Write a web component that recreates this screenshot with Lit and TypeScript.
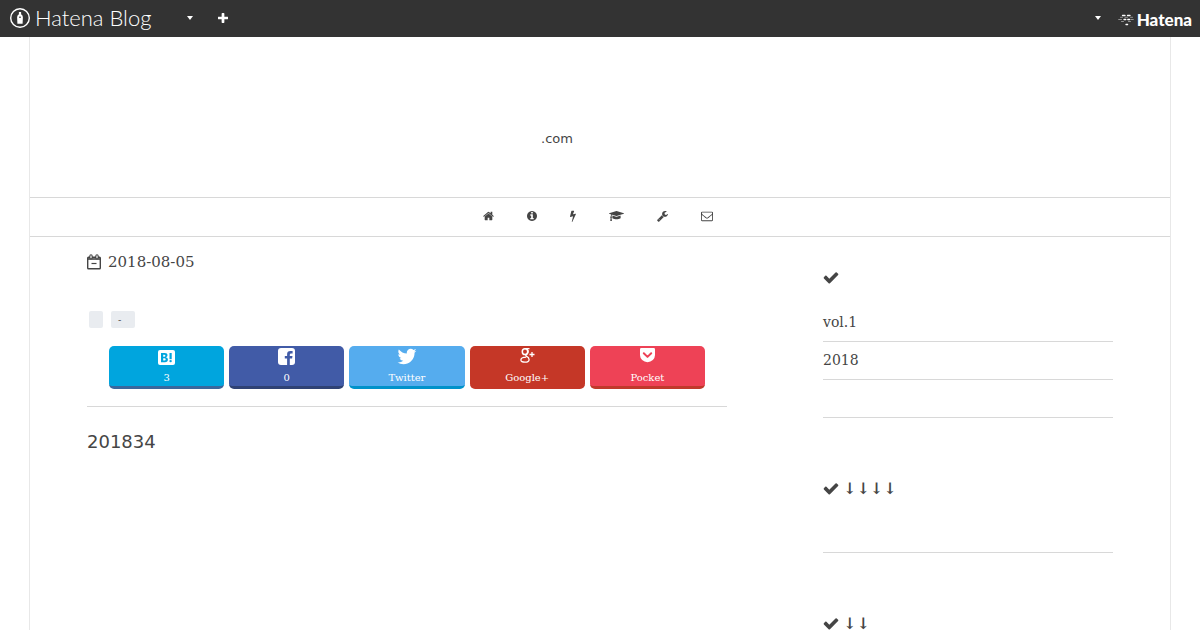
import { LitElement, html, css, nothing } from "lit";
import { customElement, property } from "lit/decorators.js";

type Glyph = { box: string; d: string };

const GLYPHS: Record<string, Glyph> = {
  home: { box: "64 0 1664 1792", d: "M1472 992v480q0 26-19 45t-45 19h-384v-384h-256v384h-384q-26 0-45-19t-19-45v-480q0-1 .5-3t.5-3l575-474 575 474q1 2 1 6zm223-69l-62 74q-8 9-21 11h-3q-13 0-21-7l-692-577-692 577q-12 8-24 7-13-2-21-11l-62-74q-8-10-7-23.5t11-21.5l719-599q32-26 76-26t76 26l244 204v-195q0-14 9-23t23-9h192q14 0 23 9t9 23v408l219 182q10 8 11 21.5t-7 23.5z" },
  info: { box: "128 0 1536 1792", d: "M1152 1376v-160q0-14-9-23t-23-9h-96v-512q0-14-9-23t-23-9h-320q-14 0-23 9t-9 23v160q0 14 9 23t23 9h96v320h-96q-14 0-23 9t-9 23v160q0 14 9 23t23 9h448q14 0 23-9t9-23zm-128-896v-160q0-14-9-23t-23-9h-192q-14 0-23 9t-9 23v160q0 14 9 23t23 9h192q14 0 23-9t9-23zm640 416q0 209-103 385.5t-279.5 279.5-385.5 103-385.5-103-279.5-279.5-103-385.5 103-385.5 279.5-279.5 385.5-103 385.5 103 279.5 279.5 103 385.5z" },
  bolt: { box: "448 0 896 1792", d: "M1333 566q18 20 7 44l-540 1157q-13 25-42 25-4 0-14-2-17-5-25.5-19t-4.5-30l197-808-406 101q-4 1-12 1-18 0-31-11-18-15-13-39l201-825q4-14 16-23t28-9h328q19 0 32 12.5t13 29.5q0 8-5 18l-171 463 396-98q8-2 12-2 19 0 34 15z" },
  cap: { box: "0 0 2304 1792", d: "M1774 836l18 316q4 69-82 128t-235 93.5-323 34.5-323-34.5-235-93.5-82-128l18-316 574 181q22 7 48 7t48-7zm530-324q0 23-22 31l-1120 352q-4 1-10 1t-10-1l-652-206q-43 34-71 111.5t-34 178.5q63 36 63 109 0 69-58 107l58 433q2 14-8 25-9 11-24 11h-192q-15 0-24-11-10-11-8-25l58-433q-58-38-58-107 0-73 65-111 11-207 98-330l-333-104q-22-8-22-31t22-31l1120-352q4-1 10-1t10 1l1120 352q22 8 22 31z" },
  wrench: { box: "64 0 1664 1792", d: "M448 1472q0-26-19-45t-45-19-45 19-19 45 19 45 45 19 45-19 19-45zm644-420l-682 682q-37 37-90 37-52 0-91-37l-106-108q-38-36-38-90 0-53 38-91l681-681q39 98 114.5 173.5t173.5 114.5zm634-435q0 39-23 106-47 134-164.5 217.5t-258.5 83.5q-185 0-316.5-131.5t-131.5-316.5 131.5-316.5 316.5-131.5q58 0 121.5 16.5t107.5 46.5q16 11 16 28t-16 28l-293 169v224l193 107q5-3 79-48.5t135.5-81 70.5-35.5q15 0 23.5 10t8.5 25z" },
  mail: { box: "0 0 1792 1792", d: "M1664 1504v-768q-32 36-69 66-268 206-426 338-51 43-83 67t-86.5 48.5-102.5 24.5h-2q-48 0-102.5-24.5t-86.5-48.5-83-67q-158-132-426-338-37-30-69-66v768q0 13 9.5 22.5t22.5 9.5h1472q13 0 22.5-9.5t9.5-22.5zm0-1051v-24.5l-.5-13-3-12.5-5.5-9-9-7.5-14-2.5h-1472q-13 0-22.5 9.5t-9.5 22.5q0 168 147 284 193 152 401 317 6 5 35 29.5t46 37.5 44.5 31.5 50.5 27.5 43 9h2q20 0 43-9t50.5-27.5 44.5-31.5 46-37.5 35-29.5q208-165 401-317 54-43 100.5-115.5t46.5-131.5zm128-37v1088q0 66-47 113t-113 47h-1472q-66 0-113-47t-47-113v-1088q0-66 47-113t113-47h1472q66 0 113 47t47 113z" },
  check: { box: "64 0 1664 1792", d: "M1671 566q0 40-28 68l-724 724-136 136q-28 28-68 28t-68-28l-136-136-362-362q-28-28-28-68t28-68l136-136q28-28 68-28t68 28l294 295 656-657q28-28 68-28t68 28l136 136q28 28 28 68z" },
  plus: { box: "192 128 1408 1408", d: "M1600 736v192q0 40-28 68t-68 28h-416v416q0 40-28 68t-68 28h-192q-40 0-68-28t-28-68v-416h-416q-40 0-68-28t-28-68v-192q0-40 28-68t68-28h416v-416q0-40 28-68t68-28h192q40 0 68 28t28 68v416h416q40 0 68 28t28 68z" },
  caret: { box: "0 0 6 4", d: "M0 0h6L3 4z" },
  twitter: { box: "64 192 1664 1408", d: "M1684 408q-67 98-162 167 1 14 1 42 0 130-38 259.5t-115.5 248.5-184.5 210.5-258 146-323 54.5q-271 0-496-145 35 4 78 4 225 0 401-138-105-2-188-64.5t-114-159.5q33 5 61 5 43 0 85-11-112-23-185.5-111.5t-73.5-205.5v-4q68 38 146 41-66-44-105-115t-39-154q0-88 44-163 121 149 294.5 238.5t371.5 99.5q-8-38-8-74 0-134 94.5-228.5t228.5-94.5q140 0 236 102 109-21 205-78-37 115-142 178 93-10 186-50z" },
};

const glyph = (name: string, cls: string) => html`<svg class=${cls} viewBox=${GLYPHS[name].box} fill="currentColor" aria-hidden="true"><path d=${GLYPHS[name].d}></path></svg>`;

const SHARE_ICONS: Record<string, unknown> = {
  hatena: html`<svg class="mark" viewBox="0 0 17 17" aria-hidden="true">
    <rect x="0" y="2" width="17" height="15" rx="2" fill="#fff"></rect>
    <path fill="#00a5de" fill-rule="evenodd" d="M3 5h3.700q2.800 0 2.800 2.300 0 1.600-1.600 2 2 .3 2 2.300 0 2.600-3 2.600H3zM5.200 6.800v2h1q1.200 0 1.200-1t-1.200-1zM5.200 10.300v2.200h1.200q1.300 0 1.300-1.100t-1.300-1.100z"></path>
    <path fill="#00a5de" d="M11.500 5h2.200v6.200h-2.200z"></path><circle cx="12.600" cy="13.100" r="1.200" fill="#00a5de"></circle>
  </svg>`,
  facebook: html`<svg class="mark" viewBox="0 0 17 17" aria-hidden="true">
    <rect width="17" height="17" rx="3" fill="#fff"></rect>
    <path fill="#415ba7" d="M9.100 17v-6.400H6.800V8h2.300V6.300Q9.100 3 12.400 3h2.200v2.600h-1.500q-1.300 0-1.300 1.100V8h2.700l-.4 2.600h-2.300V17z"></path>
  </svg>`,
  twitter: glyph("twitter", "mark bird"),
  google: html`<svg class="mark" viewBox="0 1 17 17" fill="none" stroke="#fff" aria-hidden="true">
    <ellipse cx="6" cy="4.700" rx="2.700" ry="2.900" stroke-width="1.500"></ellipse>
    <path d="M5.500 1.600h5M8 2.200q1.500 1 1.200 2.800-.2 1.200-1.200 2Q6 8.300 7.300 9.200q2.800 1.400 2.800 3.300 0 2.700-4.100 2.700-4.100 0-4.100-2.300 0-2.500 5.300-2.700" stroke-width="1.300"></path>
    <path d="M13 5v5M10.500 7.500h5" stroke-width="1.300"></path>
  </svg>`,
  pocket: html`<svg class="mark" viewBox="0 0 17 17" aria-hidden="true">
    <path fill="#fff" d="M2.200 0h12.600Q16 0 16 1.300V7a7.500 7.200 0 0 1-15 0V1.300Q1 0 2.200 0z"></path>
    <path d="M4.800 5.300L8.500 8.900l3.700-3.600" fill="none" stroke="#ee4256" stroke-width="2" stroke-linecap="round" stroke-linejoin="round"></path>
  </svg>`,
};

@customElement("share-button")
class ShareButton extends LitElement {
  @property() kind = "";
  @property() label = "";

  static styles = css`
    :host { display: block; }
    .link {
      display: flex; flex-direction: column; align-items: center; gap: 6px;
      box-sizing: border-box; height: 43px; padding-top: 2px;
      border-radius: 5px; border-bottom: 3px solid;
      color: #fff; text-decoration: none;
      font: 10px/14px "DejaVu Serif", serif;
    }
    .mark { display: block; width: 17px; height: 17px; overflow: visible; }
    .bird { width: 20px; }
    .hatena { background: #00a5de; border-color: #39679d; }
    .facebook { background: #415ba7; border-color: #2f4274; }
    .twitter { background: #55acee; border-color: #0092ca; }
    .google { background: #c53727; border-color: #c53727; }
    .pocket { background: #ee4256; border-color: #c0392b; }
  `;

  render() {
    return html`<a class="link ${this.kind}" href="#">${SHARE_ICONS[this.kind]}<span>${this.label}</span></a>`;
  }
}

@customElement("side-module")
class SideModule extends LitElement {
  @property() heading = "";
  @property({ attribute: false }) items: string[] = [];

  static styles = css`
    :host { display: block; margin-bottom: 59px; }
    .title {
      display: flex; align-items: flex-start; gap: 4px; height: 24px; margin: 0 0 14px;
      font: bold 16px/24px "DejaVu Serif", serif;
    }
    .tick { width: 16px; height: 17px; padding-top: 3px; }
    .list { margin: 0; padding: 0; list-style: none; }
    .row {
      box-sizing: border-box; height: 38px; border-bottom: 1px solid #d8d8d8;
      font: 14px/37px "DejaVu Serif", serif;
    }
    .entry { color: inherit; text-decoration: none; }
  `;

  render() {
    return html`
      <h2 class="title">${glyph("check", "tick")}<span>${this.heading}</span></h2>
      <ul class="list">
        ${this.items.map((t) => html`<li class="row">${t ? html`<a class="entry" href="#">${t}</a>` : nothing}</li>`)}
      </ul>`;
  }
}

const NAV = [
  ["home", "w11", "Home"], ["info", "w10", "About"], ["bolt", "w6", "Power"],
  ["cap", "w15", "Study"], ["wrench", "w11", "Tools"], ["mail", "w12", "Contact"],
];
const SHARES = [["hatena", "3"], ["facebook", "0"], ["twitter", "Twitter"], ["google", "Google+"], ["pocket", "Pocket"]];

@customElement("app-root")
class AppRoot extends LitElement {
  static styles = css`
    :host {
      display: block; background: #fff; color: #454545;
      font-family: "DejaVu Serif", serif;
    }
    .bar {
      display: flex; align-items: center; height: 37px; padding: 0 8px 0 9px;
      background: #333; color: #fff;
    }
    .brand, .hatena { display: flex; align-items: center; color: #fff; text-decoration: none; }
    .brand { gap: 4px; height: 36px; margin-bottom: 1px; font: 300 22px/34px Lato, sans-serif; }
    .nib { width: 22px; height: 22px; }
    .hatena { gap: 3px; font: 900 17px/20px Lato, sans-serif; padding-top: 2px; }
    .dots { width: 16px; height: 12px; }
    .tool {
      display: flex; align-items: center; justify-content: center; width: 33px; height: 37px;
      padding: 0 0 1px; border: 0; background: none; color: #fff;
    }
    .first { margin-left: 22px; }
    .last { margin: 0 3px 0 auto; }
    .caret { width: 6px; height: 4px; }
    .plus { width: 10px; height: 10px; }
    .page {
      max-width: 1140px; margin: 0 auto;
      border: solid #e8e8e8; border-width: 0 1px;
    }
    .head { padding: 93px 86px 49px 0; text-align: center; }
    .site { margin: 0; font: 13px/18px "DejaVu Sans", sans-serif; }
    .nav {
      display: flex; justify-content: center; align-items: center; gap: 33px; box-sizing: border-box;
      height: 40px; padding: 0 4px 2px; border: solid #d8d8d8; border-width: 1px 0;
    }
    .icon { display: block; color: #454545; }
    .pic { display: block; height: 12px; }
    .w6 { width: 6px; } .w10 { width: 10px; } .w11 { width: 11px; } .w12 { width: 12px; } .w15 { width: 15px; }
    .nav { padding-left: 0; }
    .body { display: flex; justify-content: space-between; gap: 24px; padding: 0 5%; }
    .main { flex: 0 1 640px; padding-top: 14px; }
    .side { flex: 0 0 290px; padding-top: 29px; }
    .date { display: flex; align-items: center; gap: 7px; font-size: 15px; line-height: 22px; }
    .cal { width: 14px; height: 16px; }
    .tags { display: flex; gap: 8px; margin-top: 38px; padding-left: 2px; }
    .tag {
      box-sizing: border-box; min-width: 14px; height: 17px; padding: 0 7px; border-radius: 2px;
      background: #e9ecf0; color: #454545; font: 10px/17px "DejaVu Serif", serif; text-decoration: none;
    }
    .wide { min-width: 24px; }
    .shares {
      display: grid; grid-template-columns: repeat(5, 1fr); gap: 5px;
      padding: 18px 22px 17px; border-bottom: 1px solid #d8d8d8;
    }
    .lead { margin: 22px 0 0; font: 18px/26px "DejaVu Sans", sans-serif; }
  `;

  render() {
    return html`
      <header class="bar">
        <a class="brand" href="#">
          <svg class="nib" viewBox="0 0 22 22" aria-hidden="true">
            <circle cx="11" cy="11" r="9.300" fill="none" stroke="#fff" stroke-width="1.400"></circle>
            <path fill="#fff" d="M9.900 5h2.200v2.200q1.800 1.100 1.800 3l-.3 6.600H8.400L8.100 10.200q0-1.900 1.800-3z"></path>
            <path fill="#333" d="M10.300 9.600h1.400v1.400h-1.400z"></path>
          </svg>
          <span>Hatena Blog</span>
        </a>
        <button class="tool first" aria-label="Blog menu">${glyph("caret", "caret")}</button>
        <button class="tool" aria-label="New entry">${glyph("plus", "plus")}</button>
        <button class="tool last" aria-label="Account menu">${glyph("caret", "caret")}</button>
        <a class="hatena" href="#">
          <svg class="dots" viewBox="0 0 16 12" fill="none" stroke="#fff" stroke-linecap="round" aria-hidden="true">
            <path d="M4.500 1.500h2.500M9.500 1.500h2.500M6 5.500h1.800M9.800 5.500h1.800M8 10.500h1.600" stroke-width="1.300"></path>
            <path d="M2.500 3.300h2M7 3.300h2.500M12.500 3.300h2M.7 5.500h2.800M13 5.500h2.300M3.500 7.500h2M10.500 7.500h2" stroke-width=".8" opacity=".6"></path>
          </svg>
          <span>Hatena</span>
        </a>
      </header>
      <div class="page">
        <div class="head"><h1 class="site">.com</h1></div>
        <nav class="nav">
          ${NAV.map(([n, w, l]) => html`<a class="icon" href="#" aria-label=${l}>${glyph(n, `pic ${w}`)}</a>`)}
        </nav>
        <div class="body">
          <main class="main">
            <div class="date">
              <svg class="cal" viewBox="0 0 14 16" fill="none" stroke="currentColor" aria-hidden="true">
                <rect x=".7" y="3.200" width="12.600" height="11.600" rx=".8" stroke-width="1.400"></rect>
                <path d="M.7 5h12.600" stroke-width="1.600"></path>
                <path d="M4 1.900v1.800M10 1.900v1.800" stroke-width="3.400" stroke-linecap="round"></path>
                <path d="M4 1.900v1.800M10 1.900v1.800" stroke="#fff" stroke-width="1.200" stroke-linecap="round"></path>
                <path d="M4.500 9.500h5" stroke-width="1.200"></path>
              </svg>
              <time datetime="2018-08-05">2018-08-05</time>
            </div>
            <div class="tags"><a class="tag" href="#"></a><a class="tag wide" href="#">-</a></div>
            <div class="shares">
              ${SHARES.map(([k, l]) => html`<share-button kind=${k} label=${l}></share-button>`)}
            </div>
            <p class="lead">201834</p>
          </main>
          <aside class="side">
            <side-module .items=${["vol.1", "2018", ""]}></side-module>
            <side-module heading="↓↓↓↓" .items=${[""]}></side-module>
            <side-module heading="↓↓" .items=${[""]}></side-module>
          </aside>
        </div>
      </div>`;
  }
}
